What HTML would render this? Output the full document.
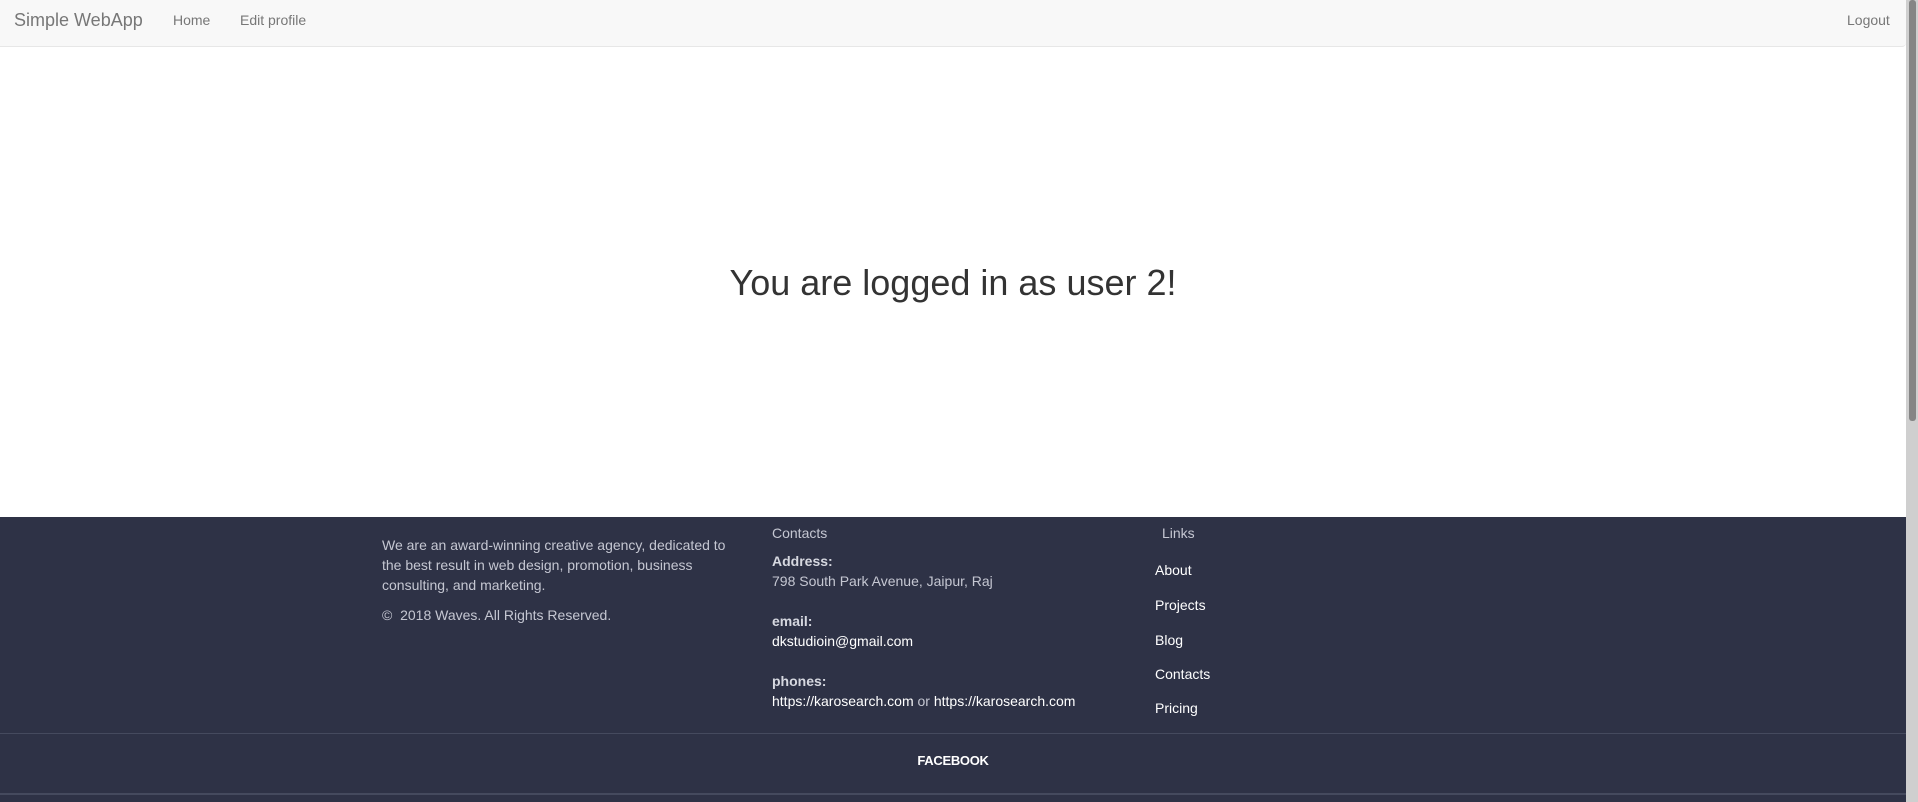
<!DOCTYPE html>
<html><head><meta charset="utf-8"><style>
*{box-sizing:border-box;margin:0;padding:0}
body{width:1918px;height:802px;overflow:hidden;font-family:"Liberation Sans",Arial,sans-serif;background:#fff;position:relative}
.page{position:absolute;left:0;top:0;width:1906px;height:802px}
.nav{position:absolute;left:0;top:0;width:1906px;height:47px;background:#f8f8f8;border-bottom:1px solid #e7e7e7;border-radius:0 0 4px 0}
.nav span{position:absolute;top:0;line-height:40px;color:#777;font-size:14px}
.brand{font-size:18px!important;left:14px}
h1{position:absolute;top:259px;left:0;width:1906px;text-align:center;font-size:36px;font-weight:400;color:#333;line-height:48px}
.foot{position:absolute;left:0;top:517px;width:1906px;height:285px;background:#2e3246;color:#c5c7d2;font-size:14px}
.t{position:absolute;white-space:nowrap;line-height:20px}
.w{color:#fff}
b{color:#d6d8e0}
.line{position:absolute;left:0;width:1906px;height:1px;background:#454a5e}
.sb{position:absolute;left:1906px;top:0;width:12px;height:802px;background:#cfcfcf}
.th{position:absolute;left:1909px;top:0;width:7px;height:421px;background:#858585;border-radius:3px}
</style></head><body>
<div class="page">
<div class="nav">
<span class="brand">Simple WebApp</span>
<span style="left:173px">Home</span>
<span style="left:240px">Edit profile</span>
<span style="left:1847px">Logout</span>
</div>
<h1>You are logged in as user 2!</h1>
<div class="foot">
<div class="t" style="left:382px;top:18px;white-space:normal;width:360px">We are an award-winning creative agency, dedicated to the best result in web design, promotion, business consulting, and marketing.</div>
<div class="t" style="left:382px;top:88px">©&nbsp; 2018 Waves. All Rights Reserved.</div>
<div class="t" style="left:772px;top:6px">Contacts</div>
<div class="t" style="left:772px;top:34px"><b>Address:</b></div>
<div class="t" style="left:772px;top:54px">798 South Park Avenue, Jaipur, Raj</div>
<div class="t" style="left:772px;top:94px"><b>email:</b></div>
<div class="t w" style="left:772px;top:114px">dkstudioin@gmail.com</div>
<div class="t" style="left:772px;top:154px"><b>phones:</b></div>
<div class="t" style="left:772px;top:174px"><span class="w">https://karosearch.com</span> or <span class="w">https://karosearch.com</span></div>
<div class="t" style="left:1162px;top:6px">Links</div>
<div class="t w" style="left:1155px;top:43px">About</div>
<div class="t w" style="left:1155px;top:78px">Projects</div>
<div class="t w" style="left:1155px;top:113px">Blog</div>
<div class="t w" style="left:1155px;top:147px">Contacts</div>
<div class="t w" style="left:1155px;top:181px">Pricing</div>
<div class="line" style="top:216px"></div>
<div class="t w" style="left:0;width:1906px;text-align:center;top:234px;font-weight:bold;font-size:13px;letter-spacing:-0.3px">FACEBOOK</div>
<div class="line" style="top:276px;height:2px"></div>
</div>
</div>
<div class="sb"></div><div class="th"></div>
</body></html>
